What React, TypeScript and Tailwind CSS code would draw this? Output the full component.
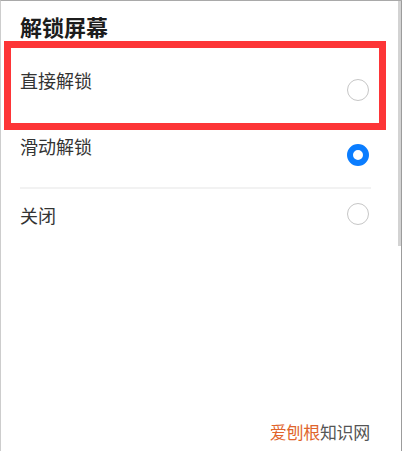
import React from "react";

const font = { fontFamily: '"Noto Sans CJK SC", "Noto Sans", sans-serif' };

function Radio({ checked }: { checked?: boolean }) {
  if (checked) {
    return (
      <span className="block size-[22px] rounded-full border-[6px] border-[#0a7dff] bg-white" />
    );
  }
  return (
    <span className="block size-[22px] rounded-full border-[1.5px] border-[#c6c6c6] bg-white" />
  );
}

export default function App() {
  return (
    <div
      className="relative flex h-[451px] w-[402px] overflow-hidden border-t border-l border-t-[#a9a9a9] border-l-[#cdcdcd] bg-white"
      style={font}
    >
      <div className="flex flex-1 flex-col">
        {/* title */}
        <div className="h-[40px] pl-[19px] pt-[14px]">
          <h1 className="text-[22px] leading-[22px] font-semibold text-[#1c1c1c]">解锁屏幕</h1>
        </div>

        {/* 直接解锁 */}
        <div className="flex h-[89px] items-start justify-between pl-[19px] pr-[29px]">
          <span className="mt-[30px] text-[18px] leading-[18px] text-[#333]">直接解锁</span>
          <span className="mt-[38px]">
            <Radio />
          </span>
        </div>

        {/* 滑动解锁 */}
        <div className="flex h-[57px] items-start justify-between pl-[19px] pr-[29px]">
          <span className="mt-[7px] text-[18px] leading-[18px] text-[#333]">滑动解锁</span>
          <span className="mt-[14px]">
            <Radio checked />
          </span>
        </div>

        <div className="ml-[19px] mr-[27px] h-[2px] bg-[#f2f2f2]" />

        {/* 关闭 */}
        <div className="flex h-[60px] items-start justify-between pl-[19px] pr-[29px]">
          <span className="mt-[17px] text-[18px] leading-[18px] text-[#333]">关闭</span>
          <span className="mt-[14px]">
            <Radio />
          </span>
        </div>

        {/* watermark */}
        <div className="mt-auto flex justify-end pr-[28px] pb-[9px]">
          <span className="text-[17px] leading-[20px] tracking-[-0.3px]">
            <span className="text-[#e0642c]">爱刨根</span>
            <span className="text-[#555]">知识网</span>
          </span>
        </div>
      </div>

      {/* scrollbar */}
      <div className="flex w-[4px] flex-row">
        <div className="w-[3px]">
          <div className="h-[245px] bg-[#d3d3d3]" />
        </div>
        <div className="w-px bg-[#9c9c9c]" />
      </div>

      {/* red annotation box */}
      <div className="pointer-events-none absolute left-[3px] top-[40px] h-[89px] w-[382px] border-[7px] border-[#fd3537]" />
    </div>
  );
}
